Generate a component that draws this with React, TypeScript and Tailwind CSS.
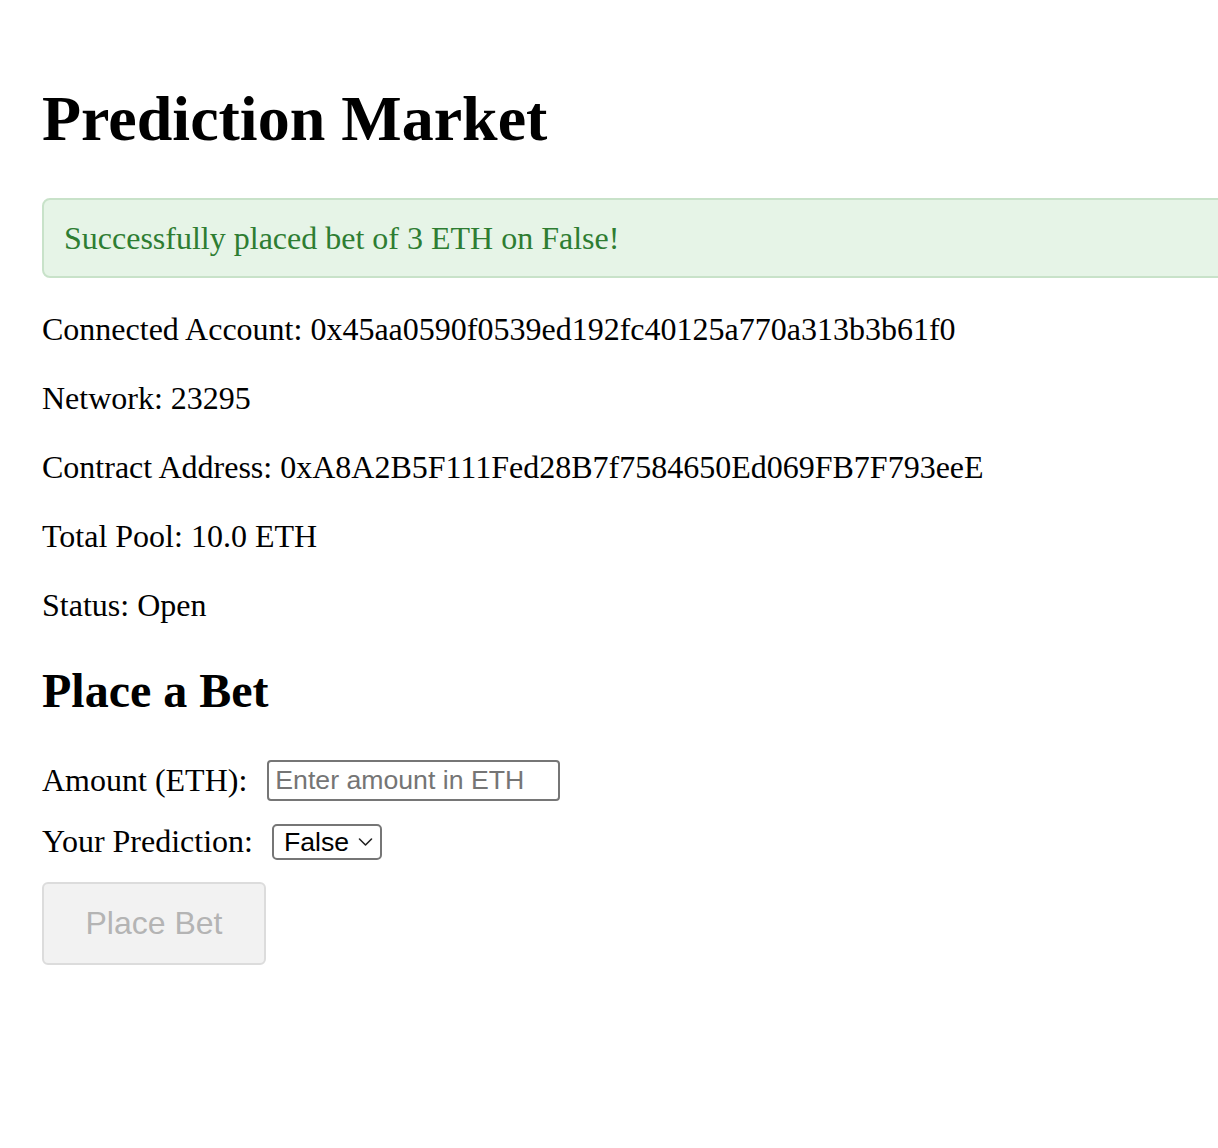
import React from 'react';

const rows = [
  { label: 'Connected Account', value: '0x45aa0590f0539ed192fc40125a770a313b3b61f0' },
  { label: 'Network', value: '23295' },
  { label: 'Contract Address', value: '0xA8A2B5F111Fed28B7f7584650Ed069FB7F793eeE' },
  { label: 'Total Pool', value: '10.0 ETH' },
  { label: 'Status', value: 'Open' },
];

const App: React.FC = () => {
  return (
    <div className="min-h-screen w-full overflow-hidden bg-white pl-[42px] pt-[82px] font-['Liberation_Serif',serif] text-black">
      <h1 className="text-[64px] font-bold leading-[73.6px]">Prediction Market</h1>

      <div className="mt-[42px] -mr-[80px] rounded-[8px] border-2 border-[#c8e2c9] bg-[#e6f4e7] px-[20px] py-[20px] text-[32px] leading-[36.8px] text-[#2e7d32]">
        Successfully placed bet of 3 ETH on False!
      </div>

      <div className="mt-[33px] flex flex-col gap-[32px] text-[32px] leading-[36.8px]">
        {rows.map(r => (
          <p key={r.label}>
            {r.label}: {r.value}
          </p>
        ))}
      </div>

      <h2 className="mt-[40px] text-[48px] font-bold leading-[55.2px]">Place a Bet</h2>

      <div className="mt-[40px] text-[32px] leading-[36.8px]">
        <div className="flex h-[43px] items-center">
          <label>Amount (ETH):</label>
          <input
            type="text"
            placeholder="Enter amount in ETH"
            className="ml-[20px] h-[41px] w-[293px] rounded-[4px] border-2 border-[#767676] px-[6px] font-['Liberation_Sans',sans-serif] text-[26.67px] leading-[30px] text-black outline-none placeholder:text-[#757575]"
          />
        </div>
        <div className="mt-[20px] flex h-[40px] items-center">
          <label>Your Prediction:</label>
          <div className="ml-[19px] flex h-[36px] w-[110px] items-center justify-between rounded-[5px] border-2 border-[#767676] pl-[10px] pr-[7px] font-['Liberation_Sans',sans-serif] text-[26.67px] leading-[30px] text-black">
            <span>False</span>
            <svg width="15" height="10" viewBox="0 0 15 10" fill="none">
              <path d="M1.5 2 L7.5 8 L13.5 2" stroke="#222" strokeWidth="1.6" strokeLinecap="round" strokeLinejoin="round" />
            </svg>
          </div>
        </div>
        <button
          disabled
          className="mt-[20px] flex h-[83px] w-[224px] items-center justify-center rounded-[6px] border-2 border-[#dcdcdc] bg-[#f2f2f2] font-['Liberation_Sans',sans-serif] text-[32px] text-[#b4b4b4]"
        >
          Place Bet
        </button>
      </div>
    </div>
  );
};

export default App;
